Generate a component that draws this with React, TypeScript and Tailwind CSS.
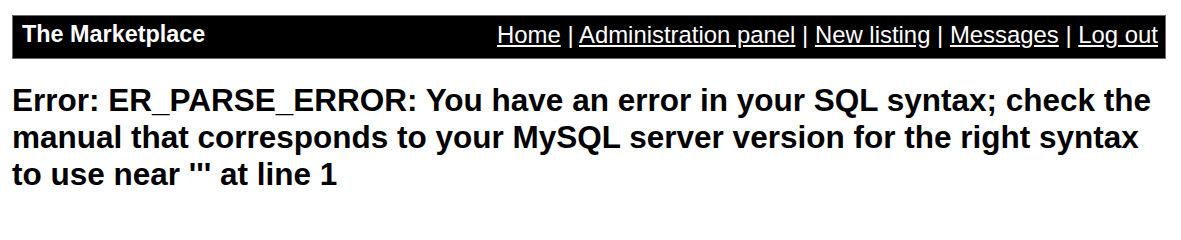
import React from "react";

export default function App() {
  const links = ["Home", "Administration panel", "New listing", "Messages", "Log out"];
  return (
    <div
      className="bg-white text-black pt-[15px] pl-[12px] pr-[15px]"
      style={{ fontFamily: '"Liberation Sans", Arial, sans-serif' }}
    >
      <div className="box-border h-[44px] bg-black border border-[#6b6b6b] flex items-start justify-between pl-[9px] pr-[7px] pt-[5px] text-white">
        <div className="text-[23.4px] font-bold leading-[normal]">The Marketplace</div>
        <div className="text-[23.9px] leading-[normal]">
          {links.map((l, i) => (
            <React.Fragment key={l}>
              {i > 0 && " | "}
              <a href="#" className="underline text-white">
                {l}
              </a>
            </React.Fragment>
          ))}
        </div>
      </div>
      <h1 className="mt-[23px] text-[31.5px] font-bold leading-[normal]">
        Error: ER_PARSE_ERROR: You have an error in your SQL syntax; check the manual that corresponds to your MySQL server version for the right syntax to use near ''' at line 1
      </h1>
    </div>
  );
}
